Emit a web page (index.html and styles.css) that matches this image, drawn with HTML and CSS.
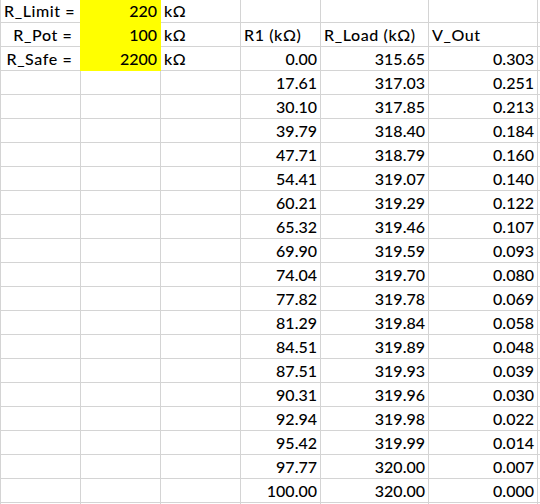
FILE: index.html
```html
<!DOCTYPE html>
<html>
<head>
<meta charset="utf-8">
<link rel="stylesheet" href="styles.css">
</head>
<body>
<div class="sheet">
  <div class="row"><div class="c r t">R_Limit =&nbsp;</div><div class="c r fill">220</div><div class="c t">kΩ</div><div class="c"></div><div class="c"></div><div class="c"></div><div class="c"></div></div>
  <div class="row"><div class="c r t">R_Pot =&nbsp;</div><div class="c r fill">100</div><div class="c t">kΩ</div><div class="c t">R1 (kΩ)</div><div class="c t">R_Load (kΩ)</div><div class="c t">V_Out</div><div class="c"></div></div>
  <div class="row"><div class="c r t">R_Safe =&nbsp;</div><div class="c r fill">2200</div><div class="c t">kΩ</div><div class="c r">0.00</div><div class="c r">315.65</div><div class="c r">0.303</div><div class="c"></div></div>
  <div class="row"><div class="c"></div><div class="c"></div><div class="c"></div><div class="c r">17.61</div><div class="c r">317.03</div><div class="c r">0.251</div><div class="c"></div></div>
  <div class="row"><div class="c"></div><div class="c"></div><div class="c"></div><div class="c r">30.10</div><div class="c r">317.85</div><div class="c r">0.213</div><div class="c"></div></div>
  <div class="row"><div class="c"></div><div class="c"></div><div class="c"></div><div class="c r">39.79</div><div class="c r">318.40</div><div class="c r">0.184</div><div class="c"></div></div>
  <div class="row"><div class="c"></div><div class="c"></div><div class="c"></div><div class="c r">47.71</div><div class="c r">318.79</div><div class="c r">0.160</div><div class="c"></div></div>
  <div class="row"><div class="c"></div><div class="c"></div><div class="c"></div><div class="c r">54.41</div><div class="c r">319.07</div><div class="c r">0.140</div><div class="c"></div></div>
  <div class="row"><div class="c"></div><div class="c"></div><div class="c"></div><div class="c r">60.21</div><div class="c r">319.29</div><div class="c r">0.122</div><div class="c"></div></div>
  <div class="row"><div class="c"></div><div class="c"></div><div class="c"></div><div class="c r">65.32</div><div class="c r">319.46</div><div class="c r">0.107</div><div class="c"></div></div>
  <div class="row"><div class="c"></div><div class="c"></div><div class="c"></div><div class="c r">69.90</div><div class="c r">319.59</div><div class="c r">0.093</div><div class="c"></div></div>
  <div class="row"><div class="c"></div><div class="c"></div><div class="c"></div><div class="c r">74.04</div><div class="c r">319.70</div><div class="c r">0.080</div><div class="c"></div></div>
  <div class="row"><div class="c"></div><div class="c"></div><div class="c"></div><div class="c r">77.82</div><div class="c r">319.78</div><div class="c r">0.069</div><div class="c"></div></div>
  <div class="row"><div class="c"></div><div class="c"></div><div class="c"></div><div class="c r">81.29</div><div class="c r">319.84</div><div class="c r">0.058</div><div class="c"></div></div>
  <div class="row"><div class="c"></div><div class="c"></div><div class="c"></div><div class="c r">84.51</div><div class="c r">319.89</div><div class="c r">0.048</div><div class="c"></div></div>
  <div class="row"><div class="c"></div><div class="c"></div><div class="c"></div><div class="c r">87.51</div><div class="c r">319.93</div><div class="c r">0.039</div><div class="c"></div></div>
  <div class="row"><div class="c"></div><div class="c"></div><div class="c"></div><div class="c r">90.31</div><div class="c r">319.96</div><div class="c r">0.030</div><div class="c"></div></div>
  <div class="row"><div class="c"></div><div class="c"></div><div class="c"></div><div class="c r">92.94</div><div class="c r">319.98</div><div class="c r">0.022</div><div class="c"></div></div>
  <div class="row"><div class="c"></div><div class="c"></div><div class="c"></div><div class="c r">95.42</div><div class="c r">319.99</div><div class="c r">0.014</div><div class="c"></div></div>
  <div class="row"><div class="c"></div><div class="c"></div><div class="c"></div><div class="c r">97.77</div><div class="c r">320.00</div><div class="c r">0.007</div><div class="c"></div></div>
  <div class="row"><div class="c"></div><div class="c"></div><div class="c"></div><div class="c r">100.00</div><div class="c r">320.00</div><div class="c r">0.000</div><div class="c"></div></div>
  <div class="row"><div class="c"></div><div class="c"></div><div class="c"></div><div class="c"></div><div class="c"></div><div class="c"></div><div class="c"></div></div>
</div>
</body>
</html>
```

FILE: styles.css
```css
html, body {
  margin: 0;
  padding: 0;
  background: #ffffff;
  overflow: hidden;
}

.sheet {
  display: flex;
  flex-direction: column;
  gap: 1px;
  background: #d4d4d4;
  padding-left: 1px;
  margin-top: -1px;
  width: 539px;
  overflow: hidden;
  font-family: "Lato", "Open Sans", sans-serif;
  font-size: 16px;
  font-weight: 500;
  color: #000000;
}

.row {
  display: grid;
  grid-template-columns: 79px 79px 79px 79px 107px 108px 80px;
  column-gap: 1px;
  height: 23px;
}

.c {
  background: #ffffff;
  height: 23px;
  line-height: 23px;
  padding: 0 3px;
  white-space: nowrap;
  overflow: hidden;
}

.r {
  text-align: right;
}

.t {
  letter-spacing: 0.6px;
}

.fill {
  background: #ffff00;
  box-shadow: 0 0 0 1px #ffff00;
}
```
